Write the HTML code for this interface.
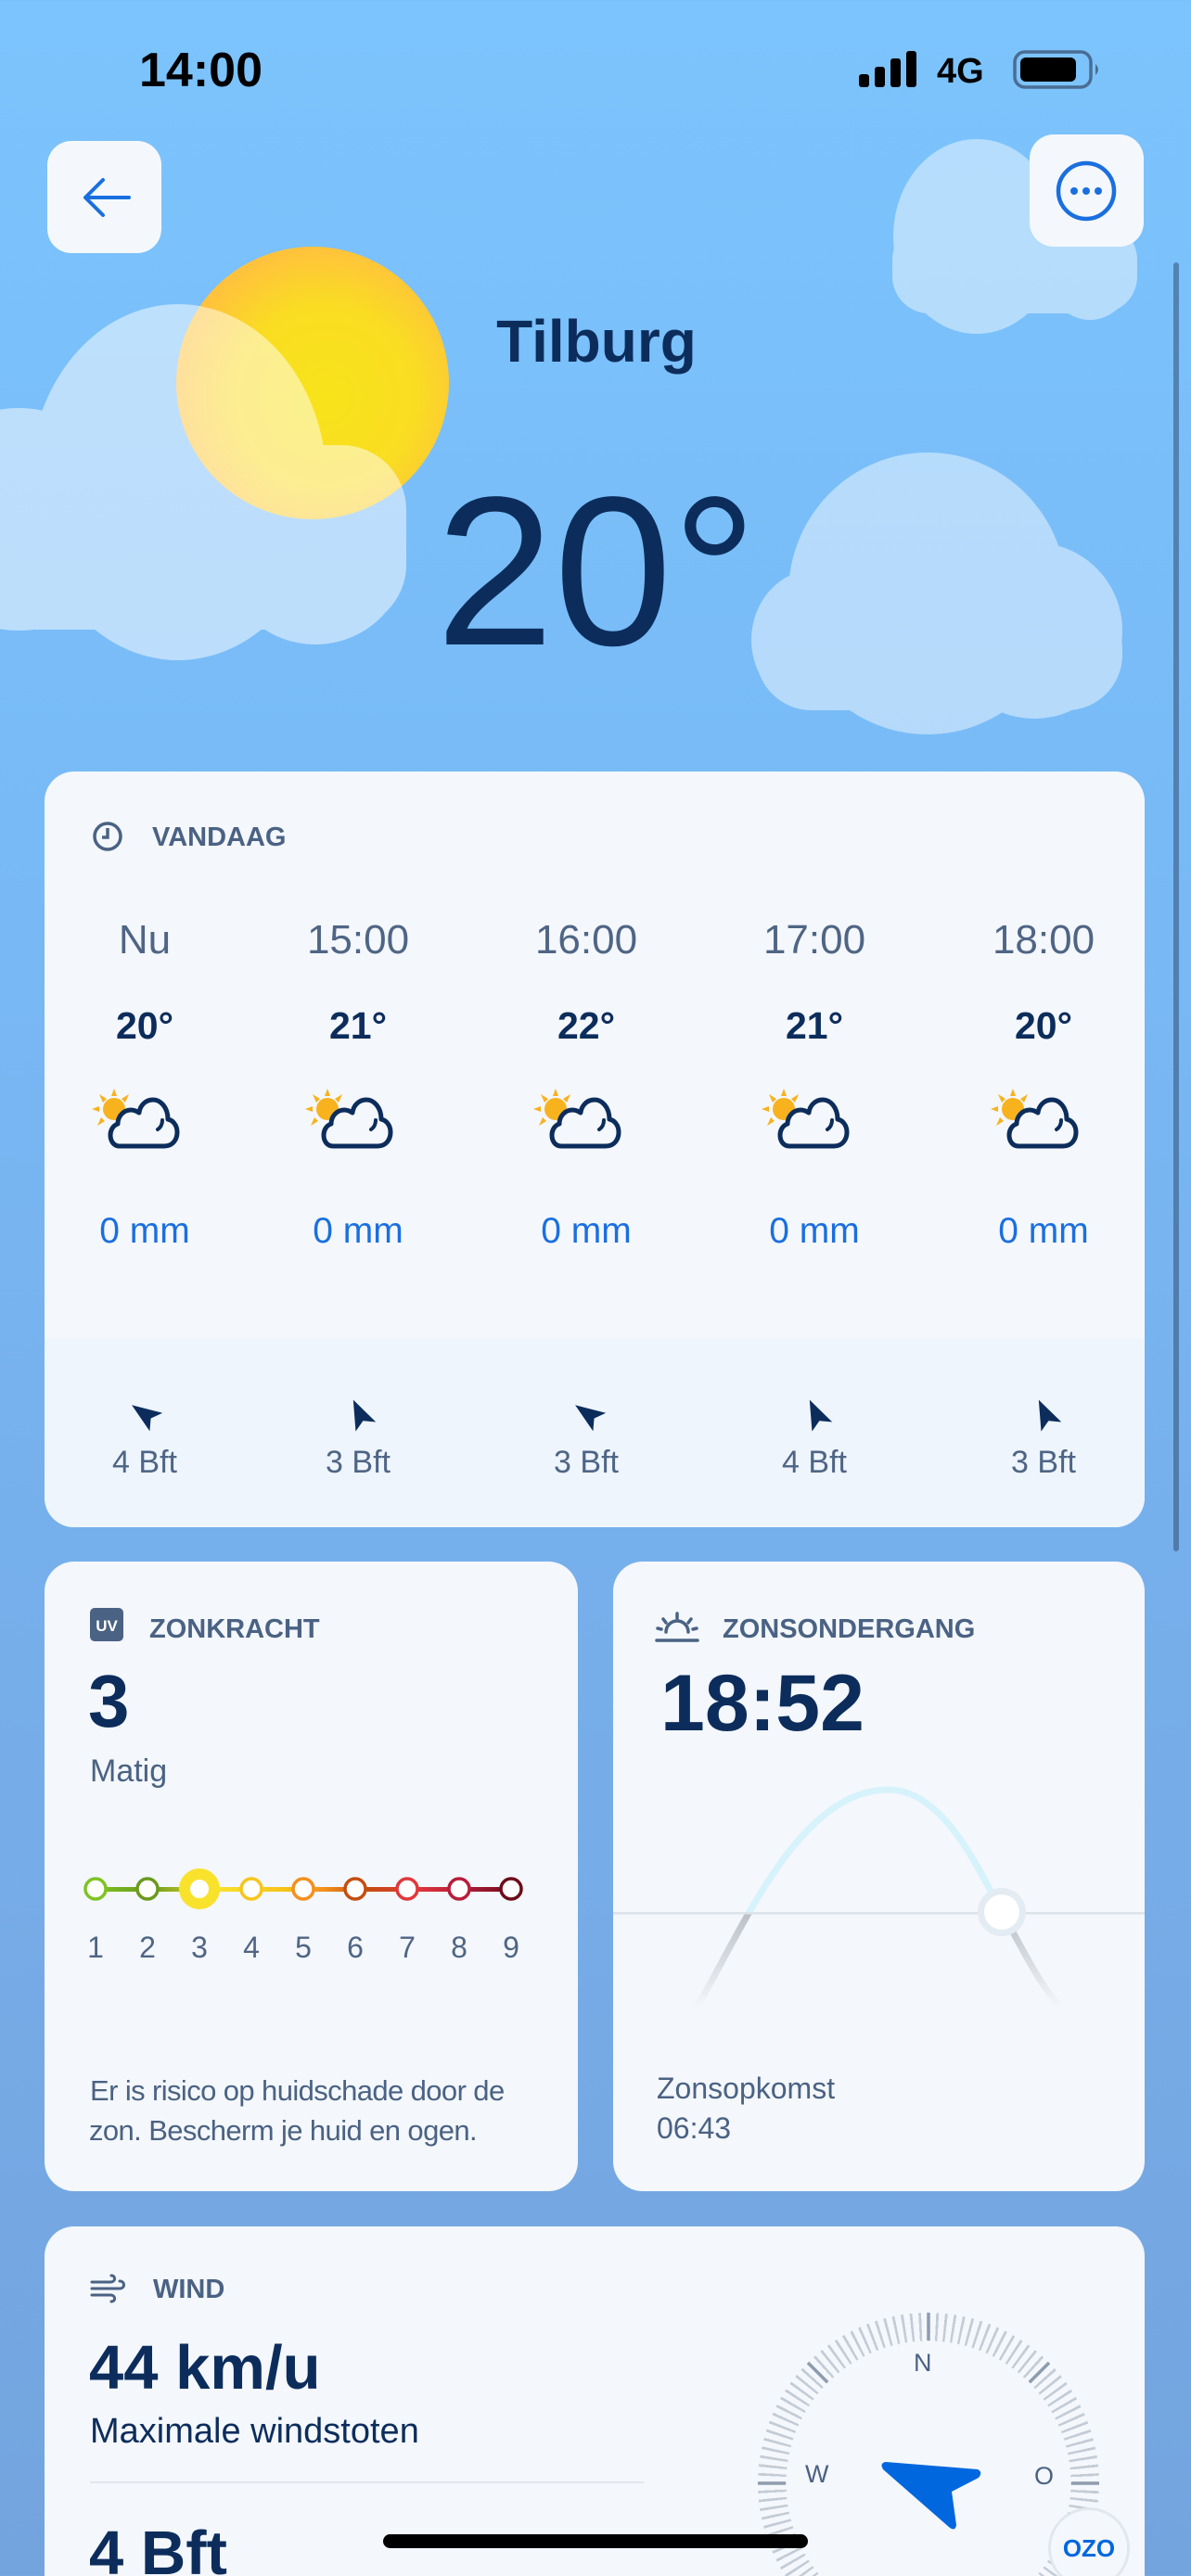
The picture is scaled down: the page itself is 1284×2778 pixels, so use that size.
<!DOCTYPE html>
<html><head><meta charset="utf-8">
<style>
*{margin:0;padding:0;box-sizing:border-box}
html,body{width:1284px;height:2778px;overflow:hidden}
body{position:relative;font-family:"Liberation Sans",sans-serif;background:linear-gradient(180deg,#7cc4fd 0px,#78baf6 900px,#76aeea 1800px,#74a4de 2778px)}
.a{position:absolute;line-height:1;white-space:nowrap}
.card{position:absolute;background:#f4f7fb;border-radius:32px;overflow:hidden}
.hdr{font-weight:bold;font-size:29px;color:#4a6283}
.c{text-align:center;width:240px;margin-left:-120px}
.t{font-size:44px;color:#4f6585}
.tp{font-size:41px;font-weight:bold;color:#0c2d5c}
.mm{font-size:39px;color:#1a6fe0}
.bf{font-size:34px;color:#4f6585}
.n{font-size:32px;color:#4f6585;width:40px;margin-left:-20px;text-align:center}
.d{font-size:31px;color:#4a6283}
</style></head><body>

<!-- background clouds & sun -->
<svg class="a" style="left:0;top:0" width="1284" height="800">
<defs>
<radialGradient id="sg" cx="0.55" cy="0.55" r="0.55"><stop offset="0" stop-color="#f8e31a"/><stop offset="0.6" stop-color="#f9dd22"/><stop offset="1" stop-color="#ffc23c"/></radialGradient>
</defs>
<g opacity="0.45" fill="#fff">
<rect x="962" y="240" width="264" height="98" rx="40"/>
<ellipse cx="1053" cy="255" rx="90" ry="105"/>
<ellipse cx="1175" cy="285" rx="50" ry="60"/>
</g>
<circle cx="337" cy="413" r="147" fill="url(#sg)"/>
<g opacity="0.5" fill="#fff">
<rect x="-30" y="480" width="468" height="199" rx="70"/>
<ellipse cx="192" cy="520" rx="160" ry="192"/>
<ellipse cx="340" cy="600" rx="98" ry="95"/>
<ellipse cx="20" cy="560" rx="120" ry="120"/>
</g>
<g opacity="0.45" fill="#fff">
<rect x="815" y="640" width="395" height="126" rx="60"/>
<ellipse cx="1000" cy="640" rx="150" ry="152"/>
<ellipse cx="1115" cy="680" rx="95" ry="95"/>
<ellipse cx="880" cy="690" rx="70" ry="76"/>
</g>
</svg>

<!-- status bar -->
<div class="a" style="left:150px;top:50px;font-size:52px;font-weight:bold;color:#000">14:00</div>
<svg class="a" style="left:924px;top:54px" width="70" height="42"><rect x="2" y="26" width="11" height="14" rx="3"/><rect x="19" y="18" width="11" height="22" rx="3"/><rect x="36" y="9" width="11" height="31" rx="3"/><rect x="53" y="1" width="11" height="39" rx="3"/></svg>
<div class="a" style="left:1010px;top:58px;font-size:38px;font-weight:bold;color:#000">4G</div>
<svg class="a" style="left:1092px;top:54px" width="98" height="44"><rect x="2" y="2" width="82" height="38" rx="11" fill="none" stroke="#4a6d93" stroke-width="3.5"/><rect x="8" y="8" width="60" height="26" rx="6" fill="#000"/><path d="M89 15 q6 6 0 12" fill="#4a6d93"/></svg>

<!-- buttons -->
<div class="a" style="left:51px;top:152px;width:123px;height:121px;background:#f4f8fc;border-radius:26px"></div>
<svg class="a" style="left:51px;top:152px" width="123" height="121"><path d="M88 61 H42 M60 42 L41 61 L60 80" fill="none" stroke="#1a6fe0" stroke-width="4" stroke-linecap="round" stroke-linejoin="round"/></svg>
<div class="a" style="left:1110px;top:145px;width:123px;height:121px;background:#f4f8fc;border-radius:26px"></div>
<svg class="a" style="left:1110px;top:145px" width="123" height="121"><circle cx="61" cy="61" r="30" fill="none" stroke="#1a6fe0" stroke-width="4.5"/><circle cx="48" cy="61" r="4" fill="#1a6fe0"/><circle cx="61" cy="61" r="4" fill="#1a6fe0"/><circle cx="74" cy="61" r="4" fill="#1a6fe0"/></svg>

<div class="a" style="left:443px;width:400px;text-align:center;top:336px;font-size:64px;font-weight:bold;color:#0c2d5c">Tilburg</div>
<div class="a" style="left:343px;width:600px;text-align:center;top:502px;font-size:229px;color:#0c2d5c">20°</div>

<!-- scrollbar -->
<div class="a" style="left:1265px;top:283px;width:6px;height:1390px;border-radius:3px;background:rgba(50,80,120,.55)"></div>

<!-- hourly card -->
<div class="card" style="left:48px;top:832px;width:1186px;height:815px">
<div style="position:absolute;left:0;top:611px;width:100%;height:204px;background:#eef5fd"></div>
</div>
<svg class="a" style="left:99px;top:885px" width="34" height="34"><circle cx="17" cy="17" r="14" fill="none" stroke="#4a6283" stroke-width="3.5"/><path d="M17 8 V18 H11" fill="none" stroke="#4a6283" stroke-width="3.5"/></svg>
<div class="a hdr" style="left:164px;top:889px">VANDAAG</div>

<div class="a c t" style="left:156px;top:992px">Nu</div>
<div class="a c t" style="left:386px;top:992px">15:00</div>
<div class="a c t" style="left:632px;top:992px">16:00</div>
<div class="a c t" style="left:878px;top:992px">17:00</div>
<div class="a c t" style="left:1125px;top:992px">18:00</div>

<div class="a c tp" style="left:156px;top:1086px">20°</div>
<div class="a c tp" style="left:386px;top:1086px">21°</div>
<div class="a c tp" style="left:632px;top:1086px">22°</div>
<div class="a c tp" style="left:878px;top:1086px">21°</div>
<div class="a c tp" style="left:1125px;top:1086px">20°</div>

<svg width="0" height="0" style="position:absolute"><defs>
<g id="wi">
<g fill="#f7b21e"><circle cx="28" cy="28" r="12"/>
<path d="M28 6 L31 14 L25 14 Z M12 12 L20 17 L16 21 Z M44 12 L40 21 L36 17 Z M4 28 L12 25 L12 31 Z M10 46 L14 37 L18 41 Z"/></g>
<path d="M34 68 H82 C92 68 96 60 96 53 C96 45 91 40 86 39 C86 26 78 18 70 18 C62 18 56 24 55 32 C52 30 49 29 46 29 C38 29 32 36 32 44 C26 46 24 52 24 56 C24 63 28 68 34 68 Z" fill="#f4f7fb" stroke="#0c2d5c" stroke-width="5" stroke-linejoin="round"/>
<path d="M80 40 C80 45 78 48 75 50" fill="none" stroke="#0c2d5c" stroke-width="4" stroke-linecap="round"/>
</g>
<path id="ar" d="M0 -17 L12 15 L0 8 L-12 15 Z" fill="#0c2d5c"/>
</defs></svg>
<svg class="a" style="left:95px;top:1168px" width="102" height="74"><use href="#wi"/></svg>
<svg class="a" style="left:325px;top:1168px" width="102" height="74"><use href="#wi"/></svg>
<svg class="a" style="left:571px;top:1168px" width="102" height="74"><use href="#wi"/></svg>
<svg class="a" style="left:817px;top:1168px" width="102" height="74"><use href="#wi"/></svg>
<svg class="a" style="left:1064px;top:1168px" width="102" height="74"><use href="#wi"/></svg>

<div class="a c mm" style="left:156px;top:1308px">0 mm</div>
<div class="a c mm" style="left:386px;top:1308px">0 mm</div>
<div class="a c mm" style="left:632px;top:1308px">0 mm</div>
<div class="a c mm" style="left:878px;top:1308px">0 mm</div>
<div class="a c mm" style="left:1125px;top:1308px">0 mm</div>

<svg class="a" style="left:0;top:1490px" width="1284" height="70">
<use href="#ar" transform="translate(156,35) rotate(-55)"/>
<use href="#ar" transform="translate(388,35) rotate(-25)"/>
<use href="#ar" transform="translate(634,35) rotate(-55)"/>
<use href="#ar" transform="translate(880,35) rotate(-25)"/>
<use href="#ar" transform="translate(1127,35) rotate(-25)"/>
</svg>

<div class="a c bf" style="left:156px;top:1560px">4 Bft</div>
<div class="a c bf" style="left:386px;top:1560px">3 Bft</div>
<div class="a c bf" style="left:632px;top:1560px">3 Bft</div>
<div class="a c bf" style="left:878px;top:1560px">4 Bft</div>
<div class="a c bf" style="left:1125px;top:1560px">3 Bft</div>

<!-- UV card -->
<div class="card" style="left:48px;top:1684px;width:575px;height:679px"></div>
<svg class="a" style="left:97px;top:1734px" width="38" height="38"><rect width="36" height="36" rx="5" fill="#4a6283"/><text x="18" y="25" font-family="Liberation Sans" font-weight="bold" font-size="17" fill="#fff" text-anchor="middle">UV</text></svg>
<div class="a hdr" style="left:161px;top:1743px">ZONKRACHT</div>
<div class="a" style="left:95px;top:1795px;font-size:80px;font-weight:bold;color:#0c2d5c">3</div>
<div class="a" style="left:97px;top:1893px;font-size:34px;color:#4a6283">Matig</div>
<svg class="a" style="left:80px;top:2005px" width="500" height="64">
<defs><linearGradient id="uvl" x1="0" x2="1"><stop offset="0" stop-color="#7ec322"/><stop offset="0.13" stop-color="#6a9a1e"/><stop offset="0.3" stop-color="#f7e02a"/><stop offset="0.45" stop-color="#f8c51a"/><stop offset="0.55" stop-color="#f3901d"/><stop offset="0.65" stop-color="#c44e10"/><stop offset="0.77" stop-color="#e0383a"/><stop offset="0.88" stop-color="#b81d3a"/><stop offset="1" stop-color="#6d0e1a"/></linearGradient></defs>
<rect x="23" y="30" width="448" height="5" fill="url(#uvl)"/>
<g fill="#fff" stroke-width="3.5">
<circle cx="23" cy="32" r="11" stroke="#7ec322"/>
<circle cx="79" cy="32" r="11" stroke="#6a9a1e"/>
<circle cx="135" cy="32" r="16" stroke="#f9e22c" stroke-width="12"/>
<circle cx="191" cy="32" r="11" stroke="#f8c51a"/>
<circle cx="247" cy="32" r="11" stroke="#f3901d"/>
<circle cx="303" cy="32" r="11" stroke="#c44e10"/>
<circle cx="359" cy="32" r="11" stroke="#e0383a"/>
<circle cx="415" cy="32" r="11" stroke="#b81d3a"/>
<circle cx="471" cy="32" r="11" stroke="#6d0e1a"/>
</g></svg>
<div class="a n" style="left:103px;top:2084px">1</div>
<div class="a n" style="left:159px;top:2084px">2</div>
<div class="a n" style="left:215px;top:2084px">3</div>
<div class="a n" style="left:271px;top:2084px">4</div>
<div class="a n" style="left:327px;top:2084px">5</div>
<div class="a n" style="left:383px;top:2084px">6</div>
<div class="a n" style="left:439px;top:2084px">7</div>
<div class="a n" style="left:495px;top:2084px">8</div>
<div class="a n" style="left:551px;top:2084px">9</div>
<div class="a d" style="left:97px;top:2239px;letter-spacing:-0.6px">Er is risico op huidschade door de</div>
<div class="a d" style="left:96px;top:2282px;letter-spacing:-0.6px">zon. Bescherm je huid en ogen.</div>

<!-- sunset card -->
<div class="card" style="left:661px;top:1684px;width:573px;height:679px"></div>
<svg class="a" style="left:706px;top:1738px" width="50" height="34"><g fill="none" stroke="#4a6283" stroke-width="3.5" stroke-linecap="round"><path d="M12 22 A12 12 0 0 1 36 22"/><path d="M2 31 H46 M24 2 V7 M9 8 L12 12 M39 8 L36 12 M3 18 L7 19 M45 18 L41 19"/></g></svg>
<div class="a hdr" style="left:779px;top:1743px">ZONSONDERGANG</div>
<div class="a" style="left:712px;top:1794px;font-size:86px;font-weight:bold;color:#0c2d5c">18:52</div>
<svg class="a" style="left:661px;top:1900px" width="573" height="290">
<defs>
<clipPath id="up"><rect x="0" y="0" width="573" height="163"/></clipPath>
<clipPath id="dn"><rect x="0" y="163" width="573" height="130"/></clipPath>
<linearGradient id="gl" x1="0" y1="0" x2="0" y2="1"><stop offset="0.55" stop-color="#b8bec6"/><stop offset="1" stop-color="#f4f7fb"/></linearGradient>
</defs>
<path d="M90 265 C140 180 200 30 297 30 C360 30 400 130 420 163 C440 200 460 240 482 265" fill="none" stroke="#d6f2fb" stroke-width="7" clip-path="url(#up)"/>
<path d="M90 265 C140 180 200 30 297 30 C360 30 400 130 420 163 C440 200 460 240 482 265" fill="none" stroke="url(#gl)" stroke-width="7" clip-path="url(#dn)"/>
<rect x="0" y="162" width="573" height="2.5" fill="#dde3ea"/>
<circle cx="419" cy="162" r="26" fill="#e3ebf3"/>
<circle cx="419" cy="162" r="19" fill="#fff"/>
</svg>
<div class="a" style="left:708px;top:2236px;font-size:32px;color:#4a6283">Zonsopkomst</div>
<div class="a" style="left:708px;top:2279px;font-size:32px;color:#4a6283">06:43</div>

<!-- wind card -->
<div class="card" style="left:48px;top:2401px;width:1186px;height:420px"></div>
<svg class="a" style="left:97px;top:2452px" width="40" height="32"><g fill="none" stroke="#4a6283" stroke-width="3" stroke-linecap="round"><path d="M2 9 H22 C28 9 28 2 23 2"/><path d="M2 16 H32 C38 16 38 8 32 8"/><path d="M2 23 H22 C28 23 28 30 23 30"/></g></svg>
<div class="a hdr" style="left:165px;top:2455px">WIND</div>
<div class="a" style="left:96px;top:2520px;font-size:67px;font-weight:bold;color:#0c2d5c">44 km/u</div>
<div class="a" style="left:97px;top:2603px;font-size:38px;color:#0c2d5c">Maximale windstoten</div>
<div class="a" style="left:97px;top:2676px;width:597px;height:2px;background:#e2e7ee"></div>
<div class="a" style="left:96px;top:2720px;font-size:67px;font-weight:bold;color:#0c2d5c">4 Bft</div>

<!-- compass -->
<div class="a" style="left:817px;top:2494px;width:368px;height:368px;border-radius:50%;background:repeating-conic-gradient(from -0.4deg,#c3ccd6 0deg 0.9deg,transparent 0.9deg 3deg);-webkit-mask:radial-gradient(circle,transparent 153px,#000 154px,#000 184px,transparent 185px);mask:radial-gradient(circle,transparent 153px,#000 154px,#000 184px,transparent 185px)"></div>
<svg class="a" style="left:817px;top:2494px" width="368" height="368"><g stroke="#8d9cae" stroke-width="3.5"><path d="M184 0 V30 M0 184 H30 M338 184 H368 M54 54 L75 75 M314 54 L293 75"/></g></svg>
<div class="a" style="left:985px;top:2535px;font-size:27px;color:#4a6283">N</div>
<div class="a" style="left:868px;top:2655px;font-size:27px;color:#4a6283">W</div>
<div class="a" style="left:1115px;top:2657px;font-size:27px;color:#4a6283">O</div>
<svg class="a" style="left:900px;top:2620px" width="200" height="140"><path d="M55 35 L154 43 Q160 46 155 52 L126 67 L131 103 Q130 110 124 106 L52 43 Q48 36 55 35 Z" fill="#0067de"/></svg>
<div class="a" style="left:1130px;top:2704px;width:88px;height:88px;border-radius:50%;background:#f4f7fb;border:3px solid #e0e7ef"></div>
<div class="a" style="left:1130px;top:2735px;width:88px;text-align:center;font-size:26px;font-weight:bold;color:#0067de">OZO</div>

<!-- home indicator -->
<div class="a" style="left:413px;top:2733px;width:458px;height:15px;border-radius:8px;background:#000"></div>
</body></html>
